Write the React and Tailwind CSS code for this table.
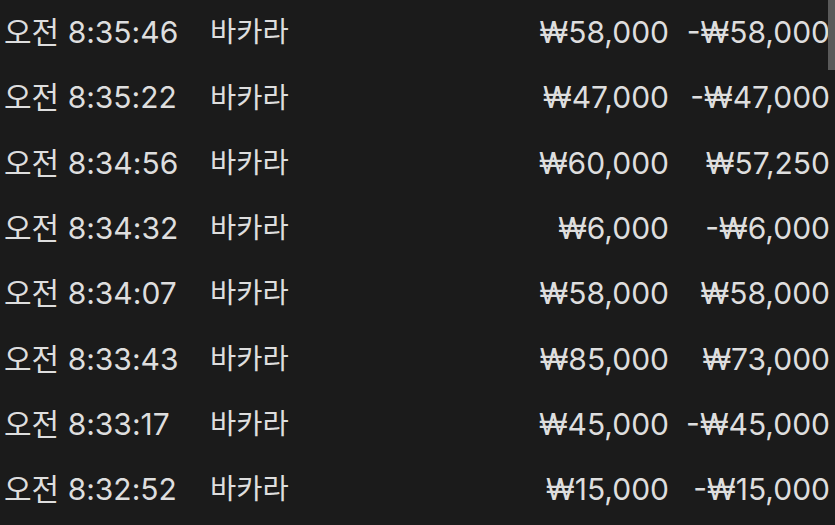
const rows = [
  { time: '오전 8:35:46', game: '바카라', bet: '₩58,000', net: '-₩58,000' },
  { time: '오전 8:35:22', game: '바카라', bet: '₩47,000', net: '-₩47,000' },
  { time: '오전 8:34:56', game: '바카라', bet: '₩60,000', net: '₩57,250' },
  { time: '오전 8:34:32', game: '바카라', bet: '₩6,000', net: '-₩6,000' },
  { time: '오전 8:34:07', game: '바카라', bet: '₩58,000', net: '₩58,000' },
  { time: '오전 8:33:43', game: '바카라', bet: '₩85,000', net: '₩73,000' },
  { time: '오전 8:33:17', game: '바카라', bet: '₩45,000', net: '-₩45,000' },
  { time: '오전 8:32:52', game: '바카라', bet: '₩15,000', net: '-₩15,000' },
];

const App = () => {
  return (
    <div
      className="relative w-[835px] h-[525px] overflow-hidden bg-[#1b1b1b] text-[#dedede] text-[30px]"
      style={{ fontFamily: 'Inter, "Noto Sans CJK KR", sans-serif' }}
    >
      {rows.map((r, i) => (
        <div key={i} className="flex items-center h-[65.3px]">
          <div className="w-[210px] pl-[4px] whitespace-nowrap">{r.time}</div>
          <div className="w-[150px] text-[28.5px] whitespace-nowrap">{r.game}</div>
          <div className="w-[309px] text-right whitespace-nowrap">{r.bet}</div>
          <div className="w-[161px] text-right whitespace-nowrap">{r.net}</div>
        </div>
      ))}

      {/* 스크롤바 */}
      <div className="absolute top-0 right-0 w-[7px] h-[70px] bg-[#5a5a5a]"></div>
    </div>
  );
};

export default App;
